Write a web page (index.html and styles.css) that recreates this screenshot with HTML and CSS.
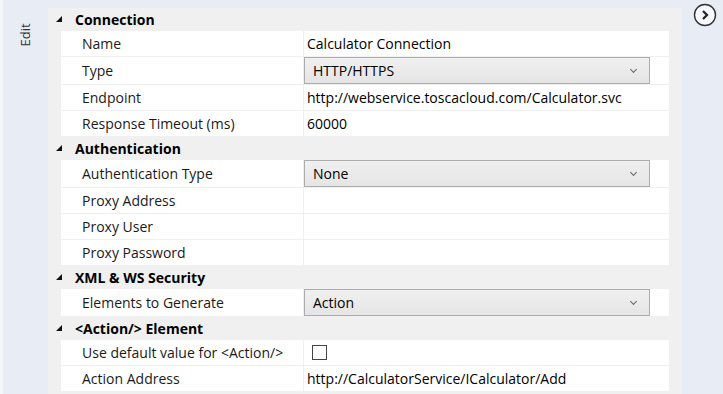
FILE: index.html
```html
<!DOCTYPE html>
<html>
<head>
    <link rel="stylesheet" href="styles.css">
</head>
<body>
    <div class="side-tab">
        <span class="side-label">Edit</span>
    </div>

    <div class="panel">
        <!-- Connection -->
        <div class="group-head"><span class="caret"></span>Connection</div>
        <div class="rows">
            <div class="row"><div class="label">Name</div><div class="value">Calculator Connection</div></div>
            <div class="row tall"><div class="label">Type</div><div class="value"><div class="combo">HTTP/HTTPS<span class="chev"></span></div></div></div>
            <div class="row"><div class="label">Endpoint</div><div class="value">http://webservice.toscacloud.com/Calculator.svc</div></div>
            <div class="row"><div class="label">Response Timeout (ms)</div><div class="value">60000</div></div>
        </div>

        <!-- Authentication -->
        <div class="group-head"><span class="caret"></span>Authentication</div>
        <div class="rows">
            <div class="row tall"><div class="label">Authentication Type</div><div class="value"><div class="combo">None<span class="chev"></span></div></div></div>
            <div class="row"><div class="label">Proxy Address</div><div class="value"></div></div>
            <div class="row"><div class="label">Proxy User</div><div class="value"></div></div>
            <div class="row"><div class="label">Proxy Password</div><div class="value"></div></div>
        </div>

        <!-- XML & WS Security -->
        <div class="group-head"><span class="caret"></span>XML &amp; WS Security</div>
        <div class="rows">
            <div class="row tall"><div class="label">Elements to Generate</div><div class="value"><div class="combo">Action<span class="chev"></span></div></div></div>
        </div>

        <!-- Action element -->
        <div class="group-head"><span class="caret"></span>&lt;Action/&gt; Element</div>
        <div class="rows">
            <div class="row"><div class="label">Use default value for &lt;Action/&gt;</div><div class="value"><span class="check"></span></div></div>
            <div class="row"><div class="label">Action Address</div><div class="value">http://CalculatorService/ICalculator/Add</div></div>
        </div>
    </div>

    <div class="right-rail">
        <svg class="collapse-btn" width="24" height="24" viewBox="0 0 24 24">
            <circle cx="12" cy="12" r="10.5" fill="#f7f8fb" stroke="#333" stroke-width="1.4"/>
            <path d="M10 8 L14 12 L10 16" fill="none" stroke="#222" stroke-width="2.2"/>
        </svg>
    </div>
</body>
</html>
```

FILE: styles.css
```css
body {
    margin: 0;
    height: 394px;
    overflow: hidden;
    background: #e8ecf5;
    font-family: "Open Sans", "Noto Sans", sans-serif;
    font-size: 14px;
    color: #1a1a1a;
    display: flex;
}

.side-tab {
    width: 45px;
    border-left: 3px solid #f4f6fa;
}

.side-label {
    display: block;
    transform: rotate(-90deg);
    width: 30px;
    margin: 20px 0 0 7px;
    text-align: center;
    line-height: 30px;
    color: #333;
    font-size: 13px;
}

.panel {
    width: 634px;
    margin-top: 8px;
    background: #f0f0f0;
}

.group-head {
    height: 23px;
    display: flex;
    align-items: center;
    padding-left: 8px;
    font-weight: bold;
    color: #000;
}

.caret {
    width: 0;
    height: 0;
    border-left: 6px solid transparent;
    border-bottom: 6px solid #111;
    margin: 0 13px 2px 0;
}

.rows {
    margin: 0 13px;
    background: #fff;
}

.row {
    display: grid;
    grid-template-columns: 243px 1fr;
    height: 25px;
    border-bottom: 1px solid #f0f0f0;
}

.row.tall {
    height: 27px;
}

.label {
    padding-left: 21px;
    border-right: 1px solid #f0f0f0;
    display: flex;
    align-items: center;
}

.value {
    padding-left: 3px;
    display: flex;
    align-items: center;
    color: #000;
}

.row.tall .value {
    padding-left: 0;
    align-items: stretch;
}

.combo {
    width: 346px;
    padding-left: 8px;
    box-sizing: border-box;
    border: 1px solid #acacac;
    background: linear-gradient(#f0f0f0, #e5e5e5);
    display: flex;
    align-items: center;
    justify-content: space-between;
}

.chev {
    width: 4px;
    height: 4px;
    border-right: 1.5px solid #666;
    border-bottom: 1.5px solid #666;
    transform: rotate(45deg);
    margin: 0 13px 3px 0;
}

.check {
    width: 15px;
    height: 15px;
    box-sizing: border-box;
    border: 1px solid #444;
    background: #fff;
    margin-left: 5px;
}

.right-rail {
    flex: 1;
    padding: 3px 0 0 11px;
}

.collapse-btn {
    display: block;
}
```
